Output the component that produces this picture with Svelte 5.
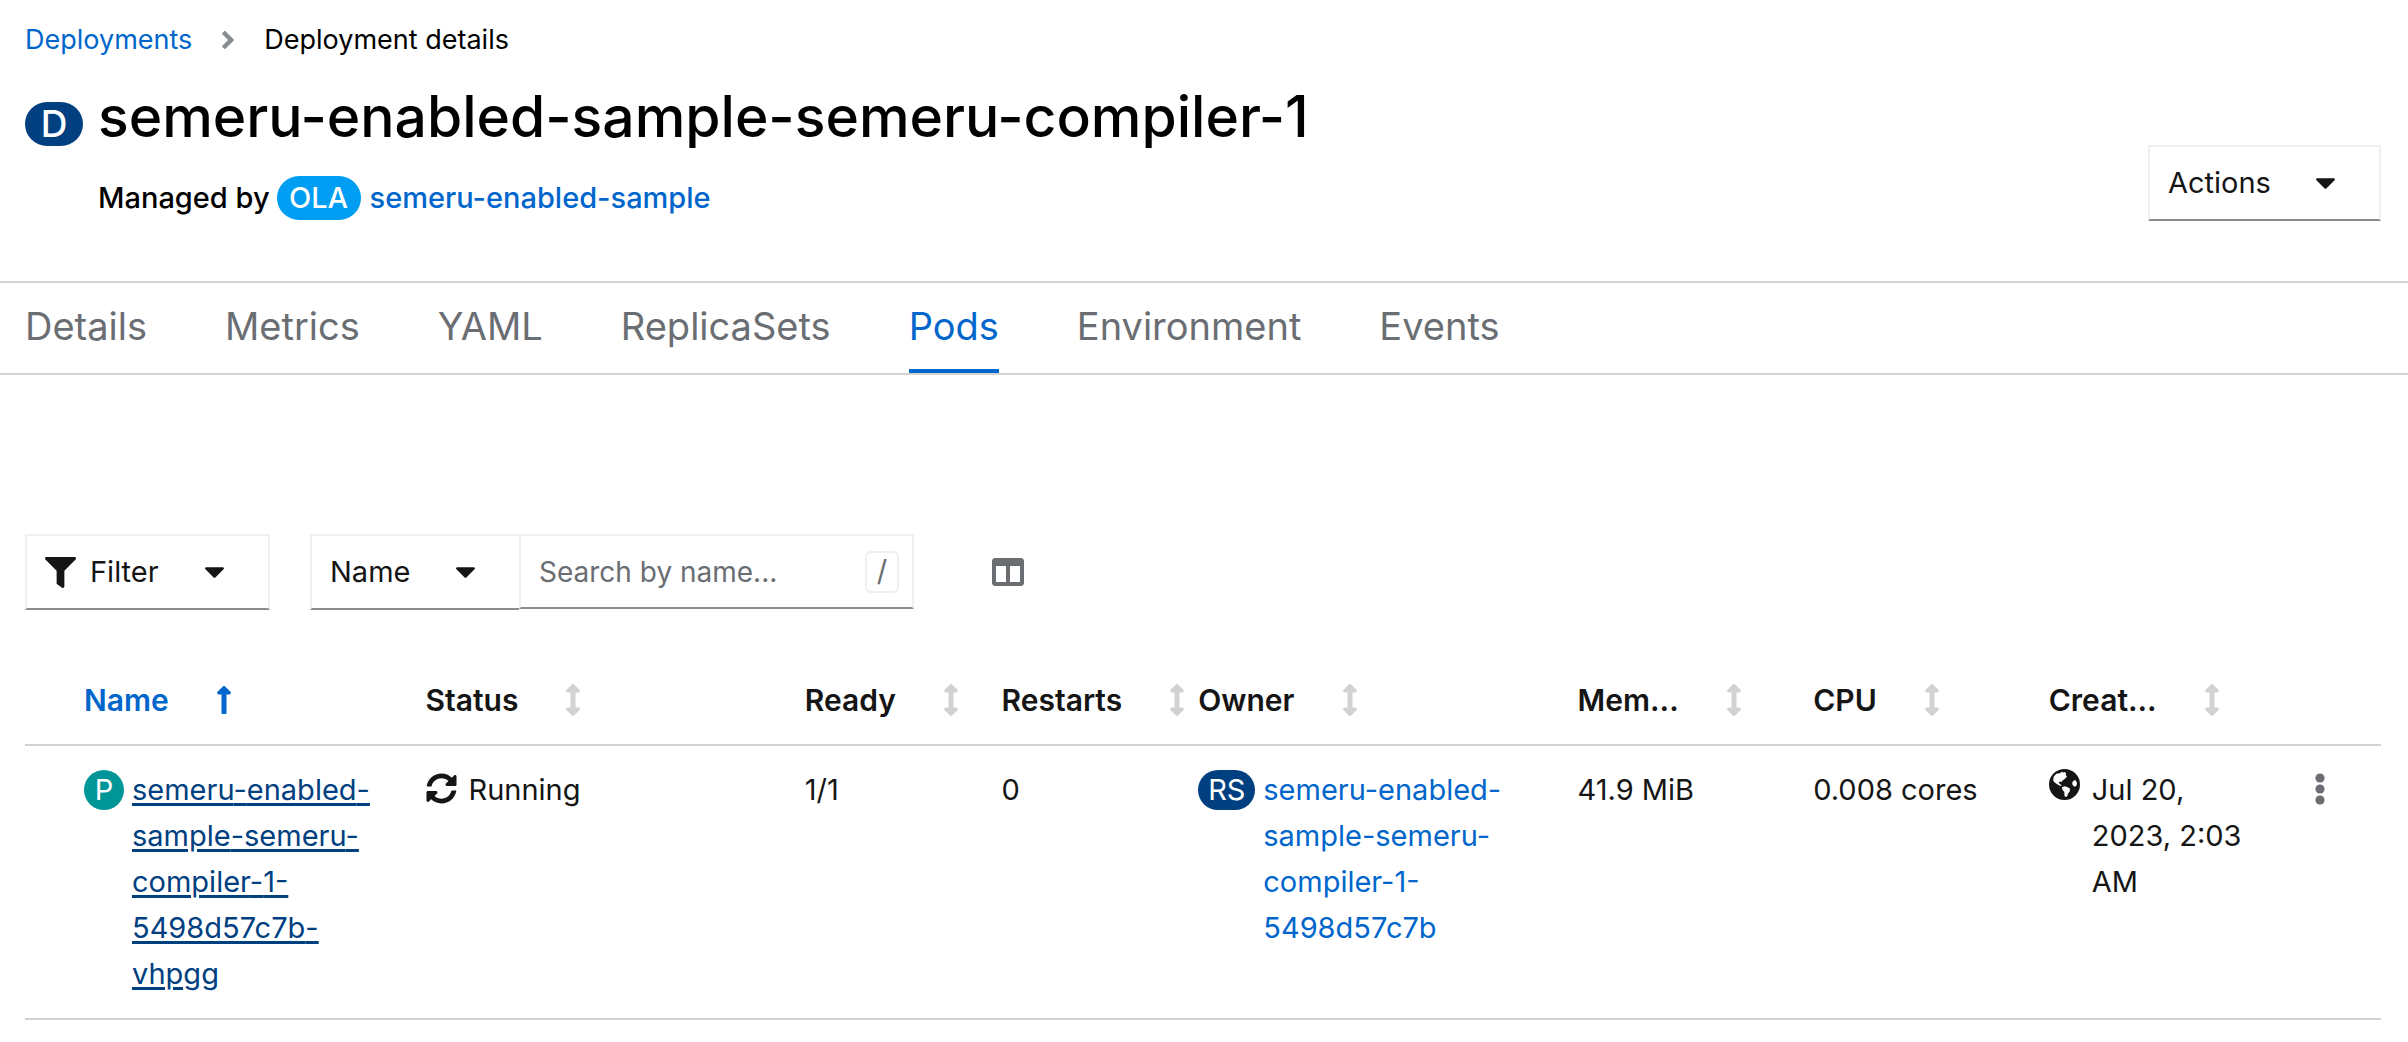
<script>
  const columns = [
    { key: 'name', label: 'Name', sorted: true },
    { key: 'status', label: 'Status' },
    { key: 'ready', label: 'Ready' },
    { key: 'restarts', label: 'Restarts' },
    { key: 'owner', label: 'Owner' },
    { key: 'memory', label: 'Mem...' },
    { key: 'cpu', label: 'CPU' },
    { key: 'created', label: 'Creat...' },
  ];
  const tabs = ['Details', 'Metrics', 'YAML', 'ReplicaSets', 'Pods', 'Environment', 'Events'];
  const pods = [
    {
      name: 'semeru-enabled-sample-semeru-compiler-1-5498d57c7b-vhpgg',
      status: 'Running',
      ready: '1/1',
      restarts: '0',
      owner: 'semeru-enabled-sample-semeru-compiler-1-5498d57c7b',
      memory: '41.9 MiB',
      cpu: '0.008 cores',
      created: 'Jul 20, 2023, 2:03 AM',
    },
  ];
  let active = $state('Pods');
  let query = $state('');
  let attribute = $state('Name');
</script>

{#snippet caret()}
  <svg class="caret" viewBox="10 190 300 172" aria-hidden="true"><path d="M31.3 192h257.3c17.8 0 26.7 21.5 14.1 34.1L174.1 354.8c-7.8 7.8-20.5 7.8-28.3 0L17.2 226.1C4.6 213.5 13.5 192 31.3 192z" /></svg>
{/snippet}

{#snippet broken(text)}
  {#each text.split('-') as part, i}{#if i > 0}-<wbr />{/if}{part}{/each}
{/snippet}

<header>
  <nav class="crumbs" aria-label="Breadcrumb">
    <a href="#deployments">Deployments</a>
    <svg viewBox="24 95 208 322" aria-hidden="true"><path d="M224.3 273l-136 136c-9.4 9.4-24.6 9.4-33.9 0l-22.6-22.6c-9.4-9.4-9.4-24.6 0-33.9l96.4-96.4-96.4-96.4c-9.4-9.4-9.4-24.6 0-33.9L54.3 103c9.4-9.4 24.6-9.4 33.9 0l136 136c9.5 9.4 9.5 24.6.1 34z" /></svg>
    <span>Deployment details</span>
  </nav>
  <div class="heading">
    <div class="titles">
      <span class="badge big">D</span>
      <h1>semeru-enabled-sample-semeru-compiler-1</h1>
      <p class="managed">
        <span>Managed by</span>
        <span class="badge ola">OLA</span>
        <a href="#owner">semeru-enabled-sample</a>
      </p>
    </div>
    <button class="box actions" type="button" aria-haspopup="menu">Actions {@render caret()}</button>
  </div>
</header>

<div class="tabs" role="tablist">
  {#each tabs as tab}
    <button type="button" role="tab" aria-selected={active === tab} class:active={active === tab} onclick={() => (active = tab)}>{tab}</button>
  {/each}
</div>

<main>
  <div class="toolbar">
    <button class="box filter" type="button" aria-haspopup="listbox">
      <svg class="funnel" viewBox="0 0 512 512" aria-hidden="true"><path d="M487.976 0H24.028C2.71 0-8.047 25.866 7.058 40.971L192 225.941V432c0 7.831 3.821 15.17 10.237 19.662l80 55.98C298.02 518.69 320 507.493 320 487.98V225.941l184.947-184.97C520.021 25.896 509.338 0 487.976 0z" /></svg>
      <span>Filter</span>
      {@render caret()}
    </button>
    <div class="box attribute">
      <select aria-label="Search attribute" bind:value={attribute}>
        <option>Name</option>
        <option>Label</option>
      </select>
      {@render caret()}
    </div>
    <div class="box search">
      <input type="text" aria-label="Search by name" placeholder="Search by name..." bind:value={query} />
      <kbd>/</kbd>
    </div>
    <button class="manage" type="button" aria-label="Manage columns">
      <svg viewBox="0 32 512 448" aria-hidden="true"><path d="M464 32H48C21.49 32 0 53.49 0 80v352c0 26.51 21.49 48 48 48h416c26.51 0 48-21.49 48-48V80c0-26.51-21.49-48-48-48zM224 416H64V160h160v256zm224 0H288V160h160v256z" /></svg>
    </button>
  </div>

  <table>
    <colgroup>
      {#each columns as col}<col class="col-{col.key}" />{/each}
      <col />
    </colgroup>
    <thead>
      <tr>
        {#each columns as col}
          <th scope="col" aria-sort={col.sorted ? 'ascending' : undefined}>
            <button type="button" class="sort" class:sorted={col.sorted}>
              <span>{col.label}</span>
              {#if col.sorted}
                <svg viewBox="16 0 224 512" aria-hidden="true"><path d="M88 166.059V468c0 6.627 5.373 12 12 12h56c6.627 0 12-5.373 12-12V166.059h46.059c21.382 0 32.09-25.851 16.971-40.971l-86.059-86.059c-9.373-9.373-24.569-9.373-33.941 0l-86.059 86.059c-15.119 15.119-4.411 40.971 16.971 40.971H88z" /></svg>
              {:else}
                <svg viewBox="16 0 224 512" aria-hidden="true"><path d="M214.059 377.941H168V134.059h46.059c21.382 0 32.09-25.851 16.971-40.971L144.971 7.029c-9.373-9.373-24.568-9.373-33.941 0L24.971 93.088c-15.119 15.119-4.411 40.971 16.971 40.971H88v243.882H41.941c-21.382 0-32.09 25.851-16.971 40.971l86.059 86.059c9.373 9.373 24.568 9.373 33.941 0l86.059-86.059c15.12-15.119 4.412-40.971-16.97-40.971z" /></svg>
              {/if}
            </button>
          </th>
        {/each}
        <td></td>
      </tr>
    </thead>
    <tbody>
      {#each pods as pod}
        <tr>
          <td>
            <div class="resource">
              <span class="badge pod">P</span>
              <a class="hovered" href="#pod">{@render broken(pod.name)}</a>
            </div>
          </td>
          <td>
            <div class="status">
              <svg viewBox="0 0 512 512" aria-hidden="true"><path d="M370.72 133.28C339.458 104.008 298.888 87.962 255.848 88c-77.458.068-144.328 53.178-162.791 126.85-1.344 5.363-6.122 9.15-11.651 9.15H24.103c-7.498 0-13.194-6.807-11.807-14.176C33.933 94.924 134.813 8 256 8c66.448 0 126.791 26.136 171.315 68.685L463.03 40.97C478.149 25.851 504 36.559 504 57.941V192c0 13.255-10.745 24-24 24H345.941c-21.382 0-32.09-25.851-16.971-40.971l41.75-41.749zM32 296h134.059c21.382 0 32.09 25.851 16.971 40.971l-41.75 41.75c31.262 29.273 71.835 45.319 114.876 45.28 77.418-.07 144.315-53.144 162.787-126.849 1.344-5.363 6.122-9.15 11.651-9.15h57.304c7.498 0 13.194 6.807 11.807 14.176C478.067 417.076 377.187 504 256 504c-66.448 0-126.791-26.136-171.315-68.685L48.97 471.03C33.851 486.149 8 475.441 8 454.059V320c0-13.255 10.745-24 24-24z" /></svg>
              {pod.status}
            </div>
          </td>
          <td>{pod.ready}</td>
          <td>{pod.restarts}</td>
          <td>
            <div class="resource">
              <span class="badge set">RS</span>
              <a href="#replicaset">{@render broken(pod.owner)}</a>
            </div>
          </td>
          <td>{pod.memory}</td>
          <td>{pod.cpu}</td>
          <td>
            <div class="created">
              <svg viewBox="0 0 30 30" aria-hidden="true">
                <circle cx="15" cy="15" r="15" />
                <path class="land" d="M7 4.6 10.5 4l2-1.4 1.2.8 1.6-.4 1.2 1.4-.3 1.4 1.2 1.4-1.6 2-2.4 1.6-1.5 1.8-1.6-.6-1 1.6 1.6 1 1.6 2-2.4-.6-2.6-1.4L5 12.6 4 10.8 4.6 7.4zM12.6 17.6l2.4-.8 2.6.6 2.8 1.8-.4 2.6-1.6 1.8-.8 2.8-1.6.8-1-1.4-.2-3.6-1.8-2zM24.4 11l1.6.2 1 2-.2 2.6-1.6 1.4-1.6-.8-1.2-2 .6-2.2z" />
              </svg>
              <span>{pod.created}</span>
            </div>
          </td>
          <td>
            <button class="kebab" type="button" aria-label="Pod actions">
              <svg viewBox="0 0 10 32" aria-hidden="true"><circle cx="5" cy="5" r="4.6" /><circle cx="5" cy="16" r="4.6" /><circle cx="5" cy="27" r="4.6" /></svg>
            </button>
          </td>
        </tr>
      {/each}
    </tbody>
  </table>
</main>

<style>
  :global(body) {
    margin: 0;
    background: #fff;
    color: #151515;
    font-family: Inter, 'Liberation Sans', sans-serif;
    font-size: 29px;
    line-height: 46px;
  }
  a {
    color: #06c;
    text-decoration: none;
  }
  button,
  input,
  select {
    margin: 0;
    padding: 0;
    border: 0;
    background: none;
    color: inherit;
    font: inherit;
  }
  svg {
    flex: none;
    display: block;
    fill: currentColor;
  }
  header {
    padding: 17px 27px 60px 25px;
    color: #000;
  }
  .crumbs {
    display: flex;
    align-items: center;
    font-size: 27px;
  }
  .crumbs svg {
    width: 12px;
    height: 18px;
    margin: 0 30px;
    color: #8a8d90;
  }
  .heading {
    display: flex;
    justify-content: space-between;
    align-items: flex-end;
    padding-top: 16px;
  }
  .titles {
    display: grid;
    grid-template-columns: 58px auto;
    column-gap: 15px;
    align-items: end;
  }
  h1 {
    margin: 0;
    font-size: 57px;
    font-weight: 500;
    line-height: 76px;
  }
  .badge {
    flex: none;
    display: inline-flex;
    justify-content: center;
    align-items: center;
    height: 40px;
    border-radius: 22px;
    background: #004080;
    color: #fff;
  }
  .big {
    height: 44px;
    margin-bottom: 9px;
    font-size: 37px;
    font-weight: 500;
  }
  .managed {
    grid-column: 2;
    display: flex;
    align-items: center;
    margin: 20px 0 0;
    font-weight: 500;
  }
  .ola {
    width: 84px;
    height: 44px;
    margin: 0 9px 0 7px;
    background: #009ef2;
  }
  .box {
    box-sizing: border-box;
    display: flex;
    align-items: center;
    height: 76px;
    padding: 0 18px;
    border: 2px solid #f0f0f0;
    border-bottom-color: #8a8d90;
    color: #151515;
  }
  .caret {
    width: 19px;
    height: 11px;
  }
  .actions {
    justify-content: space-between;
    width: 233px;
    padding-right: 44px;
  }
  .tabs {
    display: flex;
    gap: 78px;
    padding: 0 25px;
    border-top: 2px solid #d2d2d2;
    border-bottom: 2px solid #d2d2d2;
  }
  .tabs button {
    height: 90px;
    border-bottom: 4px solid transparent;
    color: #6a6e73;
    font-size: 38px;
  }
  .tabs .active {
    border-color: #06c;
    color: #06c;
  }
  main {
    padding: 159px 27px 0 25px;
  }
  .toolbar {
    display: flex;
    align-items: center;
  }
  .filter {
    width: 245px;
    margin-right: 40px;
    padding-right: 44px;
  }
  .filter span {
    flex: 1;
    padding-left: 14px;
    text-align: left;
  }
  .funnel {
    width: 31px;
    height: 31px;
  }
  .attribute {
    width: 209px;
    padding-right: 44px;
    border-right-width: 0;
  }
  select {
    flex: 1;
    appearance: none;
  }
  .search {
    align-self: flex-start;
    width: 395px;
    height: 75px;
    padding-right: 13px;
  }
  input {
    flex: 1;
    min-width: 0;
    font-size: 28px;
  }
  input::placeholder {
    color: #6a6e73;
    opacity: 1;
  }
  kbd {
    box-sizing: border-box;
    width: 34px;
    height: 42px;
    border: 2px solid #f0f0f0;
    border-radius: 6px;
    color: #6a6e73;
    font: inherit;
    line-height: 36px;
    text-align: center;
  }
  .manage {
    margin-left: 78px;
    color: #6a6e73;
  }
  .manage svg {
    width: 32px;
    height: 28px;
  }
  table {
    width: 100%;
    margin-top: 46px;
    border-collapse: collapse;
    table-layout: fixed;
  }
  .col-name {
    width: 17%;
  }
  .col-status,
  .col-owner {
    width: 16.1%;
  }
  .col-ready,
  .col-restarts {
    width: 8.35%;
  }
  .col-memory,
  .col-cpu,
  .col-created {
    width: 10%;
  }
  tr {
    border-bottom: 2px solid #d2d2d2;
  }
  th,
  td {
    padding: 0;
    text-align: left;
    vertical-align: top;
  }
  td {
    padding: 21px 0;
  }
  th:first-child,
  td:first-child {
    padding-left: 59px;
  }
  .sort {
    display: flex;
    align-items: center;
    height: 88px;
    font-size: 30px;
    font-weight: 600;
  }
  .sort svg {
    width: 14px;
    height: 32px;
    margin-left: 48px;
    color: #d2d2d2;
  }
  .sorted,
  .sort.sorted svg {
    color: #06c;
  }
  .resource,
  .status,
  .created {
    display: flex;
    align-items: flex-start;
  }
  .resource .badge {
    margin: 3px 8px 0 0;
  }
  .resource a {
    flex: 1;
    padding-right: 24px;
  }
  .resource .hovered {
    color: #004080;
    text-decoration: underline;
    text-decoration-thickness: 3px;
    text-underline-offset: 3px;
  }
  .pod {
    width: 40px;
    background: #009596;
  }
  .set {
    width: 57px;
  }
  .status svg,
  .created svg {
    width: 31px;
    height: 31px;
    margin: 6px 12px 0 0;
  }
  .created svg {
    margin-top: 2px;
  }
  .created span {
    padding-right: 32px;
  }
  .land {
    fill: #fff;
  }
  .kebab {
    display: block;
    padding: 6px 31px;
  }
  .kebab svg {
    width: 10px;
    height: 32px;
    color: #6a6e73;
  }
</style>
